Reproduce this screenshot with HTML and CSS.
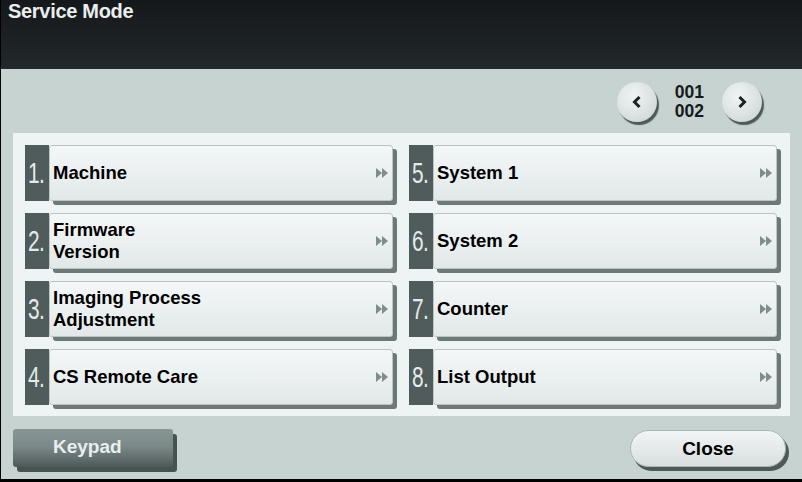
FILE: index.html
```html
<!DOCTYPE html>
<html lang="en">
<head>
    <meta charset="UTF-8">
    <title>Service Mode</title>
    <link rel="stylesheet" href="styles.css">
</head>
<body>
    <div class="screen">
        <div class="header">Service Mode</div>

        <div class="pager">
            <button class="round-btn" type="button">
                <svg width="10" height="14" viewBox="0 0 10 14"><polyline points="7.5,2 2.5,7 7.5,12" fill="none" stroke="#1d2222" stroke-width="3"/></svg>
            </button>
            <div class="page-num">001<br>002</div>
            <button class="round-btn" type="button">
                <svg width="10" height="14" viewBox="0 0 10 14"><polyline points="2.5,2 7.5,7 2.5,12" fill="none" stroke="#1d2222" stroke-width="3"/></svg>
            </button>
        </div>

        <div class="panel">
            <div class="menu">
                <div class="item"><span class="num"><span class="digit">1.</span></span><button class="menu-btn" type="button"><span class="label">Machine</span><span class="arrow"></span></button></div>
                <div class="item"><span class="num"><span class="digit">5.</span></span><button class="menu-btn" type="button"><span class="label">System 1</span><span class="arrow"></span></button></div>
                <div class="item"><span class="num"><span class="digit">2.</span></span><button class="menu-btn" type="button"><span class="label">Firmware<br>Version</span><span class="arrow"></span></button></div>
                <div class="item"><span class="num"><span class="digit">6.</span></span><button class="menu-btn" type="button"><span class="label">System 2</span><span class="arrow"></span></button></div>
                <div class="item"><span class="num"><span class="digit">3.</span></span><button class="menu-btn" type="button"><span class="label">Imaging Process<br>Adjustment</span><span class="arrow"></span></button></div>
                <div class="item"><span class="num"><span class="digit">7.</span></span><button class="menu-btn" type="button"><span class="label">Counter</span><span class="arrow"></span></button></div>
                <div class="item"><span class="num"><span class="digit">4.</span></span><button class="menu-btn" type="button"><span class="label">CS Remote Care</span><span class="arrow"></span></button></div>
                <div class="item"><span class="num"><span class="digit">8.</span></span><button class="menu-btn" type="button"><span class="label">List Output</span><span class="arrow"></span></button></div>
            </div>
        </div>

        <div class="footer">
            <button class="keypad" type="button">Keypad</button>
            <button class="close" type="button">Close</button>
        </div>
    </div>
</body>
</html>
```

FILE: styles.css
```css
* {
    box-sizing: border-box;
}

body {
    margin: 0;
    font-family: "Liberation Sans", Arial, sans-serif;
}

button {
    font-family: inherit;
    cursor: pointer;
}

.screen {
    width: 802px;
    height: 482px;
    background-color: #c6d3d0;
    border-left: 1px solid #000;
    border-bottom: 3px solid #000;
    display: flex;
    flex-direction: column;
}

.header {
    height: 69px;
    padding: 0 0 0 7px;
    background-image: linear-gradient(to bottom, #15181a, #22282b);
    color: #e9eeee;
    font-size: 20px;
    font-weight: bold;
    letter-spacing: -0.3px;
}

.pager {
    display: flex;
    justify-content: flex-end;
    align-items: center;
    gap: 18px;
    margin-top: 13px;
    padding-right: 40px;
}

.round-btn {
    width: 40px;
    height: 40px;
    padding: 0;
    border: 0;
    border-radius: 50%;
    background-image: radial-gradient(circle at 40% 35%, #f1f4f4, #d5dddc 70%, #c2ccca);
    box-shadow: 2px 3px 1px #4e5958;
    display: flex;
    align-items: center;
    justify-content: center;
}

.page-num {
    font-size: 17.5px;
    font-weight: bold;
    line-height: 19px;
    color: #151a1a;
    text-align: center;
}

.panel {
    margin: 11px 12px 0 12px;
    height: 283px;
    background-color: #eef3f3;
    padding: 12px 0 0 12px;
}

.menu {
    display: grid;
    grid-template-columns: 368px 368px;
    grid-auto-rows: 56px;
    column-gap: 16px;
    row-gap: 12px;
}

.item {
    display: flex;
}

.num {
    width: 24px;
    flex: none;
    background-color: #4f5c5b;
    display: flex;
    align-items: center;
    overflow: visible;
}

.digit {
    display: inline-block;
    font-size: 29px;
    color: #e4eaea;
    transform: scaleX(0.72);
    transform-origin: left center;
    margin-left: 3px;
    white-space: nowrap;
    letter-spacing: -1px;
}

.menu-btn {
    flex: 1;
    display: flex;
    align-items: center;
    justify-content: space-between;
    padding: 0 4px 0 3px;
    border: 1px solid #b9c4c3;
    border-radius: 3px;
    background-image: linear-gradient(to bottom, #f4f7f7, #e9eeee 60%, #e2e8e7);
    box-shadow: 4px 4px 0 #6d7978;
    text-align: left;
    color: #000;
    font-size: 18.5px;
    font-weight: bold;
    line-height: 22px;
}

.arrow {
    width: 12px;
    height: 10px;
    background-color: #7f8d8d;
    clip-path: polygon(0 0, 50% 50%, 50% 0, 100% 50%, 50% 100%, 50% 50%, 0 100%);
}

.footer {
    display: flex;
    justify-content: space-between;
    margin-top: 13px;
    padding: 0 16px 0 12px;
}

.keypad {
    width: 160px;
    height: 38px;
    border: 0;
    border-radius: 3px;
    padding: 0 0 2px 40px;
    background-image: linear-gradient(to bottom, #889595, #7b8989 45%, #606c6c 80%, #4d5858);
    box-shadow: 4px 5px 0 #48524f;
    color: #e9eeee;
    font-size: 19px;
    font-weight: bold;
    text-align: left;
}

.close {
    width: 156px;
    height: 37px;
    margin-top: 1px;
    border: 1px solid #aab5b4;
    border-radius: 19px;
    background-image: linear-gradient(to bottom, #f2f5f5, #e2e8e7 60%, #d6dedd);
    box-shadow: 3px 4px 0 #4d5857;
    color: #000;
    font-size: 19px;
    font-weight: bold;
}
```
